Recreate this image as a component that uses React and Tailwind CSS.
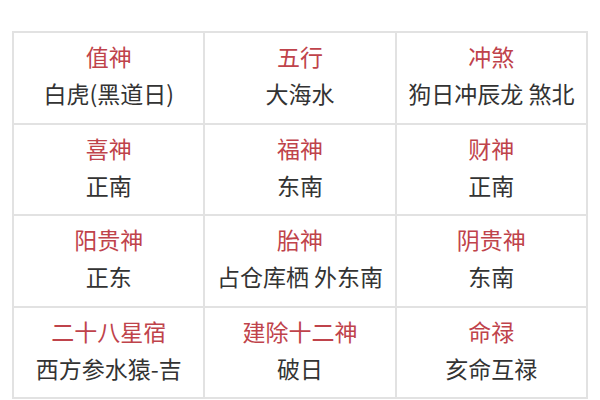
import React from "react";

const cells = [
  { label: "值神", value: "白虎(黑道日)" },
  { label: "五行", value: "大海水" },
  { label: "冲煞", value: "狗日冲辰龙 煞北" },
  { label: "喜神", value: "正南" },
  { label: "福神", value: "东南" },
  { label: "财神", value: "正南" },
  { label: "阳贵神", value: "正东" },
  { label: "胎神", value: "占仓库栖 外东南" },
  { label: "阴贵神", value: "东南" },
  { label: "二十八星宿", value: "西方参水猿-吉" },
  { label: "建除十二神", value: "破日" },
  { label: "命禄", value: "亥命互禄" },
];

export default function App() {
  return (
    <div
      className="w-[600px] h-[400px] overflow-hidden bg-white pt-[31px] px-[12px]"
      style={{ fontFamily: '"Noto Sans CJK SC", "Noto Sans", sans-serif' }}
    >
      <div className="grid grid-cols-3 border-l-2 border-t-2 border-[#e2e2e2]">
        {cells.map((c) => (
          <div
            key={c.label}
            className="h-[91.5px] flex flex-col items-center justify-center pb-[5px] border-r-2 border-b-2 border-[#e2e2e2] text-[23px] leading-[37px]"
          >
            <div className="text-[#bf434b]">{c.label}</div>
            <div className="text-[#333333]">{c.value}</div>
          </div>
        ))}
      </div>
    </div>
  );
}
